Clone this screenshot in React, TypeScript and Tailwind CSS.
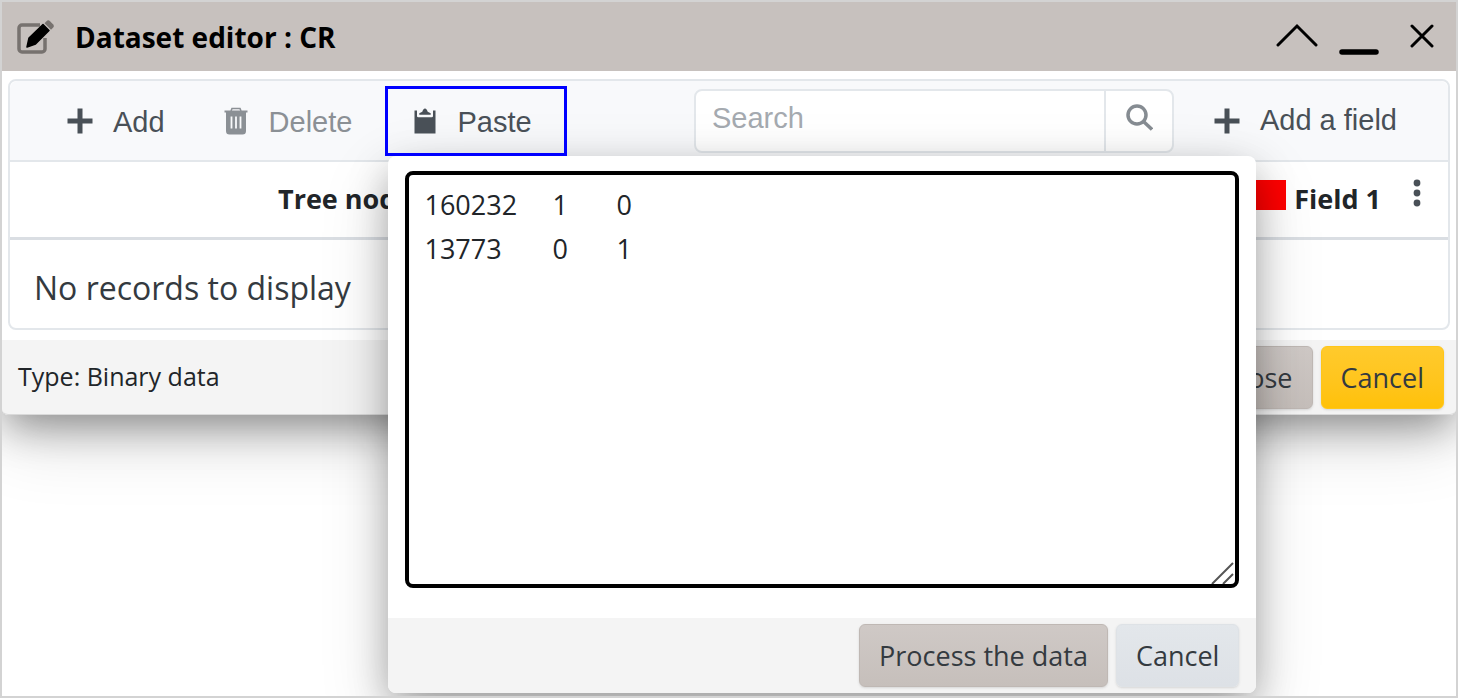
import { useState } from 'react'
import type { ReactNode } from 'react'

const initialData = '160232\t1\t0\n13773\t0\t1'

type ButtonProps = { children: ReactNode; className: string; onClick?: () => void }

function ActionButton({ children, className, onClick }: ButtonProps) {
  return (
    <button
      type="button"
      onClick={onClick}
      className={`h-[63px] shrink-0 rounded-md border px-[19px] text-[27px] leading-none text-[#343a40] shadow-sm ${className}`}
    >
      {children}
    </button>
  )
}

function PlusIcon() {
  return (
    <svg className="w-[26px] h-[26px]" viewBox="0 0 26 26" fill="currentColor">
      <path d="M10.500 .5h5v10h10v5h-10v10h-5v-10H.5v-5h10z" />
    </svg>
  )
}

function TrashIcon() {
  return (
    <svg className="w-6 h-7" viewBox="0 0 24 28">
      <path d="M7 4l1-2.500h8L17 4" fill="none" stroke="currentColor" strokeWidth="1.600" />
      <path d="M.5 3.500h23v2h-1.500V24a3.500 3.500 0 0 1-3.500 3.500h-13A3.500 3.500 0 0 1 2 24V5.500H.5z" fill="currentColor" />
      <path d="M7.500 9.500v12M12 9.500v12M16.500 9.500v12" stroke="#f8f9fb" strokeWidth="1.800" />
    </svg>
  )
}

function ClipboardIcon() {
  return (
    <svg className="w-[22px] h-[26px]" viewBox="0 0 22 26" fill="currentColor">
      <path d="M.5 2.500h2.500v5.500a1.200 1.200 0 0 0 1.200 1.200h13.600A1.200 1.200 0 0 0 19 8V2.500h2.500v23H.5z" />
      <path d="M5.300 6.800V5.200l3-1.500C8.800 1.800 9.800.5 11 .5s2.200 1.300 2.700 3.200l3 1.500v1.600z" />
    </svg>
  )
}

function PastePanel({ onClose }: { onClose: () => void }) {
  const [text, setText] = useState(initialData)

  return (
    <div className="absolute left-[3px] top-full w-[868px] z-10 rounded-lg bg-white shadow-[0_14px_40px_-4px_rgba(0,0,0,0.35),0_24px_72px_0_rgba(0,0,0,0.14)]">
      <div className="relative mx-[17px] pt-[15px] pb-[30px]">
        <textarea
          aria-label="Data to paste"
          value={text}
          onChange={(e) => setText(e.target.value)}
          className="block h-[417px] w-full resize-none rounded-lg border-4 border-black bg-white px-[15px] py-2 text-[27px] leading-[44px] text-[#212529] outline-none [tab-size:64px]"
        />
        <svg className="pointer-events-none absolute right-1 bottom-[34px] w-6 h-6" viewBox="0 0 24 24" fill="none" stroke="#555" strokeWidth="2">
          <path d="M1 24L22 3M12 24l10-10" />
        </svg>
      </div>
      <div className="flex h-[75px] items-center justify-end gap-2 rounded-b-lg bg-[#f4f4f4] px-[17px]">
        <ActionButton className="border-[#bfb8b4] bg-linear-to-b from-[#cfc9c6] to-[#c6bfbb]">Process the data</ActionButton>
        <ActionButton className="border-[#dee2e6] bg-linear-to-b from-[#e3e7eb] to-[#dde1e6]" onClick={onClose}>
          Cancel
        </ActionButton>
      </div>
    </div>
  )
}

export default function App() {
  const [pasteOpen, setPasteOpen] = useState(true)
  const [search, setSearch] = useState('')

  return (
    <main className="min-h-screen overflow-hidden border-2 border-[#d3d3d3] bg-white font-['Segoe_UI','Open_Sans',sans-serif]">
      <section className="rounded-b-md bg-white shadow-[0_14px_40px_-4px_rgba(0,0,0,0.4),0_24px_72px_0_rgba(0,0,0,0.14)]">
        <header className="flex h-[69px] items-center bg-[#c7c1be] pl-[15px] pr-[22px] text-black">
          <svg className="w-[38px] h-[34px]" viewBox="0 0 38 34" fill="none">
            <path d="M23 5H5a3 3 0 0 0-3 3v21a3 3 0 0 0 3 3h20a3 3 0 0 0 3-3V18" stroke="#77726f" strokeWidth="3.500" />
            <path d="M10 27l2-9L26 4.500l6 6L18.500 24z" fill="#000" stroke="#000" strokeWidth="1.500" strokeLinejoin="round" />
            <path d="M27.500 3.200l2-2a2.500 2.500 0 0 1 3.500 0l3 3a2.500 2.500 0 0 1 0 3.500l-2 2z" fill="#77726f" />
          </svg>
          <h1 className="ml-5 text-[28px] leading-none font-bold">Dataset editor : CR</h1>
          <div className="ml-auto flex items-center gap-5">
            <button type="button" aria-label="Collapse">
              <svg className="w-[42px] h-9" viewBox="0 0 42 36" fill="none" stroke="currentColor" strokeWidth="3" strokeLinecap="round">
                <path d="M2 26L21 7l19 19" />
              </svg>
            </button>
            <button type="button" aria-label="Minimize">
              <svg className="w-[42px] h-9" viewBox="0 0 42 36" stroke="currentColor" strokeWidth="5.500" strokeLinecap="round">
                <path d="M4 33h34" />
              </svg>
            </button>
            <button type="button" aria-label="Close window" className="ml-[10px]">
              <svg className="w-6 h-9" viewBox="0 0 24 36" fill="none" stroke="currentColor" strokeWidth="3" strokeLinecap="round">
                <path d="M2 7l20 20M22 7L2 27" />
              </svg>
            </button>
          </div>
        </header>

        <div className="px-[6px] pt-2 pb-[10px]">
          <div className="rounded-lg border-2 border-[#e3e7eb]">
            <div className="flex h-[79px] items-center rounded-t-lg bg-[#f8f9fb] pr-[51px] font-['Liberation_Sans',Arial,sans-serif] text-[29px] text-[#495057]">
              <button type="button" className="ml-[57px] flex items-center gap-5">
                <PlusIcon />
                <span className="pt-1">Add</span>
              </button>
              <button type="button" disabled className="ml-[59px] flex items-center gap-[21px] text-[#8b9095]">
                <TrashIcon />
                <span className="pt-1">Delete</span>
              </button>
              <div className="relative ml-[33px]">
                <button
                  type="button"
                  onClick={() => setPasteOpen(!pasteOpen)}
                  className="relative z-20 flex h-[70px] items-center gap-[21px] border-3 border-[#0000ff] px-[26px] pr-8"
                >
                  <ClipboardIcon />
                  <span className="pt-1">Paste</span>
                </button>
                {pasteOpen && (
                  <div className="font-['Segoe_UI','Open_Sans',sans-serif]">
                    <PastePanel onClose={() => setPasteOpen(false)} />
                  </div>
                )}
              </div>
              <div className="ml-auto flex h-16 w-[480px] rounded-lg border-2 border-[#e3e7eb] bg-white">
                <input
                  type="text"
                  aria-label="Search"
                  placeholder="Search"
                  value={search}
                  onChange={(e) => setSearch(e.target.value)}
                  className="min-w-0 flex-1 rounded-l-lg px-4 pb-1 outline-none placeholder:text-[#a5aab0]"
                />
                <button type="button" aria-label="Run search" className="flex w-[68px] items-center justify-center border-l-2 border-[#e3e7eb] pb-2 text-[#868c92]">
                  <svg className="w-7 h-7" viewBox="0 0 28 28" fill="none" stroke="currentColor">
                    <circle cx="12" cy="12" r="9" strokeWidth="3.500" />
                    <path d="M18.500 18.500L27 26.500" strokeWidth="3.500" />
                  </svg>
                </button>
              </div>
              <button type="button" className="ml-10 flex items-center gap-5 whitespace-nowrap">
                <PlusIcon />
                <span>Add a field</span>
              </button>
            </div>

            <table className="w-full border-collapse text-[#212529]">
              <thead>
                <tr className="h-[77px] border-t-2 border-b-3 border-t-[#e3e7eb] border-b-[#dadee3] text-[27px]">
                  <th className="w-1/2 pl-[268px] text-left font-bold">Tree node</th>
                  <th className="pr-[23px] font-bold">
                    <div className="flex items-center justify-end">
                      <span className="mr-2 mb-2 size-[30px] bg-[#ff0000]" />
                      <span>Field 1</span>
                      <button type="button" aria-label="Field options" className="ml-7 pb-3 text-[#495057]">
                        <svg className="w-4 h-8" viewBox="0 0 16 32" fill="currentColor">
                          <circle cx="8" cy="6" r="3.400" />
                          <circle cx="8" cy="16" r="3.400" />
                          <circle cx="8" cy="26" r="3.400" />
                        </svg>
                      </button>
                    </div>
                  </th>
                </tr>
              </thead>
              <tbody>
                <tr className="h-[90px]">
                  <td colSpan={2} className="px-6 pt-2 text-[32px] text-[#343a40]">
                    No records to display
                  </td>
                </tr>
              </tbody>
            </table>
          </div>
        </div>

        <footer className="flex h-[75px] items-center gap-2 rounded-b-md border-b border-[#d9d9d9] bg-[#f4f4f4] pl-4 pr-3 text-[#212529]">
          <p className="mr-auto text-[25px]">Type: Binary data</p>
          <ActionButton className="border-[#bfb8b4] bg-linear-to-b from-[#cfc9c6] to-[#c6bfbb]">Close</ActionButton>
          <ActionButton className="border-[#ffc61a] bg-linear-to-b from-[#ffca2c] to-[#ffc107]">Cancel</ActionButton>
        </footer>
      </section>
    </main>
  )
}
